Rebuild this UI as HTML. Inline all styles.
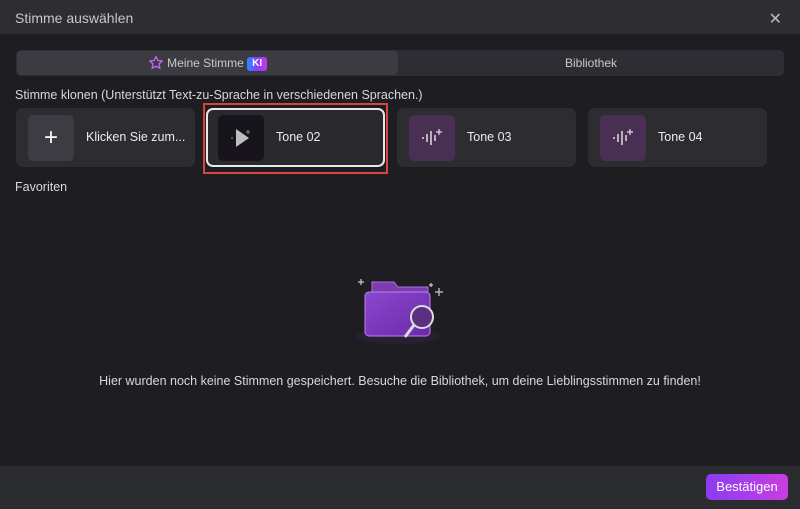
<!DOCTYPE html>
<html><head><meta charset="utf-8"><style>
*{margin:0;padding:0;box-sizing:border-box}
body{width:800px;height:509px;background:#1e1d22;font-family:"Liberation Sans",sans-serif;color:#e6e6e6;position:relative;overflow:hidden;font-size:12px}
.hdr{position:absolute;left:0;top:0;width:800px;height:35px;background:#2d2d32;border-bottom:1px solid #222}
.hdr .t{position:absolute;left:15px;top:10px;font-size:14px;color:#c8c8cb}
.x{position:absolute;right:18px;top:9px;font-size:16px;color:#bbb}
.tabs{position:absolute;left:16px;top:50px;width:768px;height:26px;background:#2d2d33;border-radius:5px}
.tab1{position:absolute;left:1px;top:1px;width:381px;height:24px;background:#3b3b41;border-radius:4px;text-align:center;line-height:24px;color:#c9c9cc}
.tab2{position:absolute;left:382px;top:0;width:386px;line-height:26px;text-align:center;color:#c9c9cc}
.ki{display:inline-block;background:linear-gradient(90deg,#2a8cff,#8a3cff,#c23ce8);color:#fff;font-weight:bold;font-size:10px;border-radius:3px;padding:0 5px;line-height:14px;vertical-align:1px}
.lbl{position:absolute;left:15px;color:#d8d8da;font-size:12.5px}
.card{position:absolute;top:108px;width:179px;height:59px;background:#2c2c31;border-radius:7px}
.ic{position:absolute;left:12px;top:7px;width:46px;height:46px;border-radius:5px;display:flex;align-items:center;justify-content:center}
.card .n{position:absolute;left:70px;top:22px;font-size:12.5px;color:#ececec}
.btn{position:absolute;left:706px;top:474px;width:82px;height:26px;border-radius:5px;background:linear-gradient(90deg,#8a3cf2,#c83ee0);color:#fff;text-align:center;line-height:26px;font-size:13px}
.ftr{position:absolute;left:0;top:466px;width:800px;height:43px;background:#2b2c30}
</style></head><body>
<div class="hdr"><div class="t">Stimme auswählen</div><div class="x">✕</div></div>
<div class="tabs"><div class="tab1"><svg width="16" height="15" style="vertical-align:-3px" viewBox="0 0 16 15"><path d="M8 1.5l1.9 4 4.3.5-3.2 3 .9 4.3L8 11.2 4.1 13.3l.9-4.3-3.2-3 4.3-.5z" fill="none" stroke="#b868e8" stroke-width="1.4" stroke-linejoin="round"/></svg> Meine Stimme <span class="ki">KI</span></div><div class="tab2">Bibliothek</div></div>
<div class="lbl" style="top:88px">Stimme klonen (Unterstützt Text-zu-Sprache in verschiedenen Sprachen.)</div>
<div class="card" style="left:16px"><div class="ic" style="background:#3c3c42;font-size:24px;color:#fff">+</div><div class="n">Klicken Sie zum...</div></div>
<div style="position:absolute;left:203px;top:103px;width:185px;height:71px;border:2px solid #d9443d"></div>
<div class="card" style="left:206px;border:2px solid #e8e8e8;background:#29292e"><div class="ic" style="left:10px;top:5px;background:#18141b"><svg width="24" height="24"><path d="M7 3 L20 12 L7 21Z" fill="#bdbdbd"/><path d="M3 11v2" stroke="#555" stroke-width="2"/><path d="M19 4v4M17 6h4" stroke="#777" stroke-width="1.2"/></svg></div><div class="n" style="left:68px;top:20px">Tone 02</div></div>
<div class="card" style="left:397px"><div class="ic" style="background:#4a2f55"><svg width="24" height="20" stroke="#ddd" stroke-width="1.5"><path d="M3 9v2M7 6v8M11 3v14M15 7v6"/><path d="M19 1v6M16 4h6" stroke-width="1.2"/></svg></div><div class="n">Tone 03</div></div>
<div class="card" style="left:588px"><div class="ic" style="background:#4a2f55"><svg width="24" height="20" stroke="#ddd" stroke-width="1.5"><path d="M3 9v2M7 6v8M11 3v14M15 7v6"/><path d="M19 1v6M16 4h6" stroke-width="1.2"/></svg></div><div class="n">Tone 04</div></div>
<div class="lbl" style="top:180px">Favoriten</div>
<svg style="position:absolute;left:340px;top:260px" width="120" height="100">
<defs><linearGradient id="g" x1="0" y1="0" x2="1" y2="1"><stop offset="0" stop-color="#8a48d0"/><stop offset="1" stop-color="#6a2aa8"/></linearGradient></defs>
<ellipse cx="58" cy="76" rx="42" ry="8" fill="#2a1f33"/>
<path d="M32 22h22l4 5h30v8H32z" fill="#7a3db0" stroke="#b070e0"/>
<rect x="25" y="32" width="65" height="44" rx="4" fill="url(#g)" stroke="#c080f0"/>
<circle cx="82" cy="57" r="11" fill="#5c3080" stroke="#ddd" stroke-width="2"/>
<path d="M74 65l-9 12" stroke="#ddd" stroke-width="3"/>
<path d="M21 19v6M18 22h6M91 23v4M89 25h4M99 28v8M95 32h8" stroke="#ccc" stroke-width="1.2"/>
</svg>
<div style="position:absolute;left:0;width:800px;top:374px;text-align:center;color:#d8d8da;font-size:12.5px">Hier wurden noch keine Stimmen gespeichert. Besuche die Bibliothek, um deine Lieblingsstimmen zu finden!</div>
<div class="ftr"></div>
<div class="btn">Bestätigen</div>
</body></html>
